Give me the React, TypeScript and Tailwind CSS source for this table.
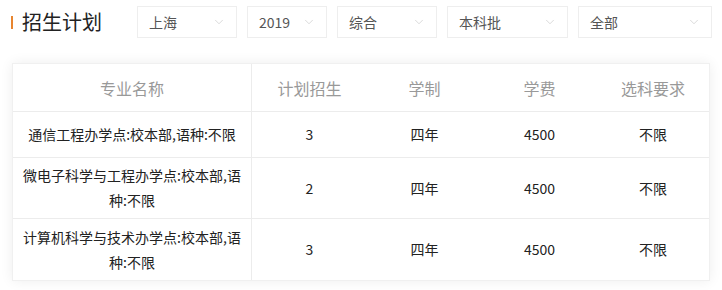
import React from 'react';
import { ChevronDown } from 'lucide-react';

const filters = [
    { label: '上海', w: 'w-[100px]' },
    { label: '2019', w: 'w-[80px]' },
    { label: '综合', w: 'w-[100px]' },
    { label: '本科批', w: 'w-[121px]' },
    { label: '全部', w: 'w-[134px]' },
];

const rows = [
    { name: '通信工程办学点:校本部,语种:不限', plan: 3, h: 'h-[46px]' },
    { name: '微电子科学与工程办学点:校本部,语种:不限', plan: 2, h: 'h-[61px]' },
    { name: '计算机科学与技术办学点:校本部,语种:不限', plan: 3, h: 'h-[61px]' },
];

const cols = 'grid grid-cols-[239px_115px_115px_115px_1fr]';

export default function App() {
    return (
        <div className="w-[722px] h-[290px] bg-white font-['Noto_Sans_CJK_SC','Noto_Sans',sans-serif] overflow-hidden">
            <div className="flex items-center pt-[6px] pl-[11px]">
                <div className="w-[2px] h-[13px] bg-[#e8852f]" />
                <h2 className="ml-[9px] text-[20px] leading-[32px] text-[#222]">招生计划</h2>
                <div className="ml-[35px] flex gap-[10px]">
                    {filters.map((f) => (
                        <div key={f.label} className={`${f.w} h-[32px] border border-[#eeeeee] flex items-center justify-between pl-[11px] pr-[10px] text-[14px] text-[#555]`}>
                            <span className="font-['Noto_Sans_CJK_SC','Liberation_Sans',sans-serif]">{f.label}</span>
                            <ChevronDown size={14} strokeWidth={1} className="text-[#c0c0c0]" />
                        </div>
                    ))}
                </div>
            </div>

            <div className="mt-[25px] mx-[12px] border border-[#f0f0f0] shadow-[0_0_12px_rgba(0,0,0,0.07)] bg-white">
                <div className={`${cols} h-[48px] border-b border-[#ececec] text-[16px] text-[#999] items-center text-center`}>
                    <div className="h-full flex items-center justify-center border-r border-[#ececec]">专业名称</div>
                    <div>计划招生</div>
                    <div>学制</div>
                    <div>学费</div>
                    <div>选科要求</div>
                </div>
                {rows.map((r, i) => (
                    <div key={i} className={`${cols} ${r.h} ${i < rows.length - 1 ? 'border-b border-[#ececec]' : ''} text-[14px] text-[#222] text-center items-center`}>
                        <div className="h-full flex items-center justify-center px-[10px] leading-[25px] border-r border-[#ececec]">{r.name}</div>
                        <div>{r.plan}</div>
                        <div>四年</div>
                        <div>4500</div>
                        <div>不限</div>
                    </div>
                ))}
            </div>
        </div>
    );
}
